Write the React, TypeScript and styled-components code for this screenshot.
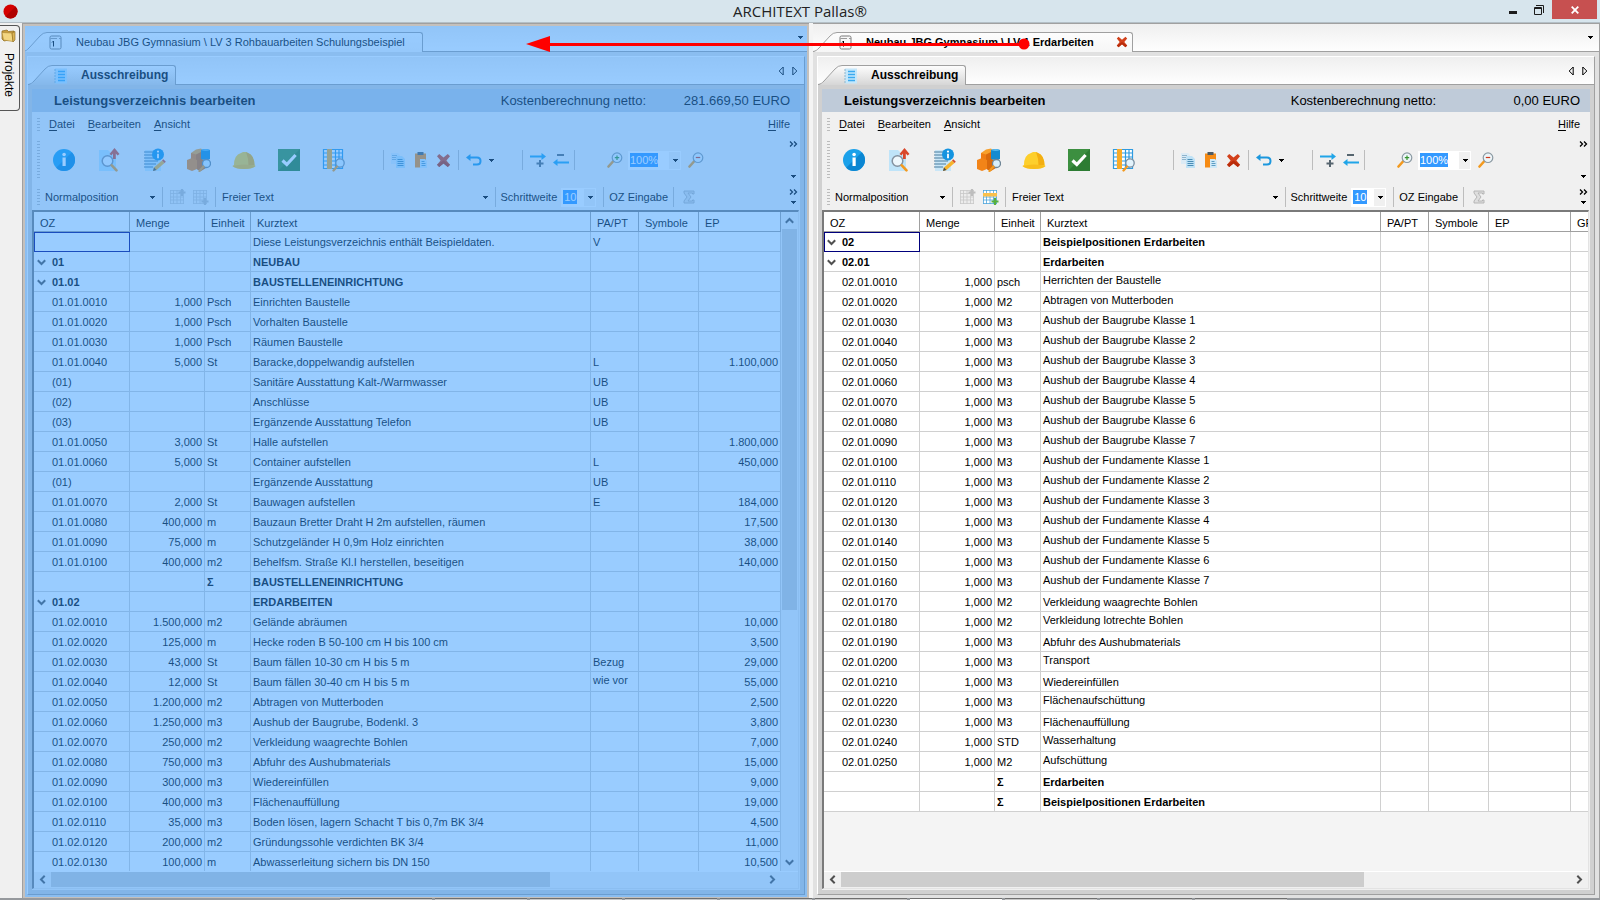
import React from 'react';
import styled, { createGlobalStyle, css } from 'styled-components';

const GlobalStyle = createGlobalStyle`
  *, *::before, *::after { box-sizing: border-box; }
  html, body { margin: 0; padding: 0; }
  body {
    font-family: "Liberation Sans", Arial, sans-serif;
    font-size: 11px;
    color: #000;
    background: #f0f0f0;
    overflow: hidden;
  }
  button, input, select { font: inherit; color: inherit; margin: 0; padding: 0; border: 0; background: none; border-radius: 0; }
`;

/* ---------- window frame ---------- */

const Window = styled.div`
  position: relative;
  display: flex;
  flex-direction: column;
  height: 100vh;
  background: #f0f0f0;
`;

const TitleBar = styled.header`
  position: relative;
  flex: none;
  display: flex;
  align-items: center;
  justify-content: center;
  height: 23px;
  background: #d7e5ed;
  border-bottom: 1px solid #b4bfc6;
`;

const AppTitle = styled.h1`
  margin: 0;
  font: 400 15px/22px "Open Sans", "Noto Sans", sans-serif;
  color: #222;
`;

const AppMark = styled.svg`
  position: absolute;
  left: 3px;
  top: 4px;
`;

const WindowButtons = styled.div`
  position: absolute;
  right: 3px;
  top: 0;
  display: flex;
`;

const WindowButton = styled.button<{ $close?: boolean }>`
  display: flex;
  align-items: center;
  justify-content: center;
  width: ${(p) => (p.$close ? 45 : 26)}px;
  height: 19px;
  background: ${(p) => (p.$close ? '#c75050' : 'transparent')};
`;

const Main = styled.div`
  flex: 1;
  min-height: 0;
  display: flex;
`;

const SideBar = styled.nav`
  flex: none;
  width: 22px;
  padding-top: 2px;
`;

const SideTab = styled.button`
  display: flex;
  flex-direction: column;
  align-items: center;
  gap: 9px;
  width: 20px;
  height: 86px;
  padding: 2px 2px 0 0;
  border: 1px solid #555;
  border-left: 0;
  border-radius: 0 4px 4px 0;
`;

const SideLabel = styled.span`
  writing-mode: vertical-rl;
  font-size: 12px;
  line-height: 14px;
`;

const Workspace = styled.main`
  flex: 1;
  min-width: 0;
  display: flex;
  gap: 4px;
  background: #f4f4f4;
  border-left: 1px solid #a0a0a0;
  border-right: 1px solid #a0a0a0;
`;

const TaskStrip = styled.footer`
  flex: none;
  display: flex;
  gap: 3px;
  height: 2px;
  padding-left: 340px;
  background: #96999d;
`;

const TaskSegment = styled.span<{ $active?: boolean }>`
  width: 92px;
  background: ${(p) => (p.$active ? '#fff' : '#c8c8c8')};
  border-top: 1px solid #6f6f6f;
`;

/* ---------- document panel ---------- */

const Panel = styled.section`
  position: relative;
  flex: 1;
  min-width: 0;
  display: flex;
  flex-direction: column;
  border-top: 1px solid #a0a0a0;
  background: #e1e1e1;
`;

const DropShade = styled.div`
  position: absolute;
  inset: 0;
  z-index: 2;
  border: 2px solid #c4c0bc;
  border-bottom-width: 1px;
  pointer-events: none;
  background: rgba(51, 153, 255, 0.5);
  background-clip: padding-box;
`;

const TabStrip = styled.div`
  flex: none;
  display: flex;
  align-items: flex-end;
  height: 28px;
  border-bottom: 1px solid #a0a0a0;
  background: linear-gradient(#efefef, #fefefe);
`;

const TabShape = styled.div<{ $shaded?: boolean }>`
  display: flex;
  height: 20px;
  margin-bottom: -1px;
  --tab-end: ${(p) => (p.$shaded ? '#d6d6d6' : '#f6f6f6')};
`;

const TabBody = styled.button<{ $bold?: boolean; $room: number }>`
  display: flex;
  align-items: center;
  height: 20px;
  padding: 0 ${(p) => p.$room}px 0 0;
  border-top: 1px solid #a0a0a0;
  border-right: 1px solid #a0a0a0;
  border-radius: 0 3px 0 0;
  background: linear-gradient(#fdfdfd, var(--tab-end));
  font-weight: ${(p) => (p.$bold ? 700 : 400)};
  white-space: nowrap;
`;

const TabLabel = styled.span<{ $size: number; $lead: number }>`
  margin-left: ${(p) => p.$lead}px;
  padding-bottom: 2px;
  font-size: ${(p) => p.$size}px;
`;

const StripTools = styled.div`
  display: flex;
  align-self: stretch;
  align-items: center;
  gap: 4px;
  margin-left: auto;
  padding-right: 4px;
`;

const GlyphButton = styled.button`
  display: flex;
  align-items: center;
  justify-content: center;
  width: 10px;
  height: 12px;
`;

const PanelInner = styled.div`
  flex: 1;
  min-height: 0;
  display: flex;
  flex-direction: column;
  margin: 4px 4px 3px;
  border: 1px solid #a0a0a0;
  border-top-color: #fff;
  border-left-color: #fff;
  background: #d0d0d0;
`;

const Editor = styled.div`
  flex: 1;
  min-height: 0;
  display: flex;
  flex-direction: column;
  margin: 4px;
  background: #f0f0f0;
`;

const Caption = styled.div`
  flex: none;
  display: flex;
  align-items: center;
  height: 23px;
  padding: 0 10px 0 22px;
  background: #bfcbd9;
  font-size: 13px;
  line-height: 22px;
`;

const CaptionTitle = styled.h2`
  flex: 1;
  margin: 0;
  font-size: 13px;
`;

const CaptionValue = styled.output`
  width: 144px;
  text-align: right;
`;

const Grip = styled.span<{ $height: number }>`
  flex: none;
  width: 3px;
  height: ${(p) => p.$height}px;
  background: repeating-linear-gradient(#bcbcbc 0 1px, transparent 1px 3px);
`;

const MenuBar = styled.div`
  flex: none;
  display: flex;
  align-items: center;
  height: 24px;
  padding: 0 10px 0 5px;
`;

const MenuButton = styled.button<{ $end?: boolean }>`
  line-height: 16px;
  margin-left: ${(p) => (p.$end ? 'auto' : '0')};
  margin-right: ${(p) => (p.$end ? 0 : 13)}px;
  &:first-of-type { margin-left: 9px; }
  u { text-underline-offset: 2px; }
`;

const Toolbar = styled.div<{ $height: number }>`
  flex: none;
  display: flex;
  align-items: center;
  height: ${(p) => p.$height}px;
  padding: 0 1px 0 5px;
`;

const ToolGroup = styled.div<{ $before?: number; $after?: number }>`
  flex: none;
  display: flex;
  align-items: center;
  margin-left: ${(p) => p.$before ?? 0}px;
  margin-right: ${(p) => p.$after ?? 0}px;
`;

const ToolButton = styled.button<{ $width: number }>`
  flex: none;
  display: flex;
  align-items: center;
  justify-content: center;
  width: ${(p) => p.$width}px;
  height: 24px;
`;

const Divider = styled.span`
  flex: none;
  width: 1px;
  height: 20px;
  background: #bdbdbd;
`;

const Overflow = styled.div<{ $gap: number }>`
  flex: none;
  display: flex;
  flex-direction: column;
  align-items: center;
  gap: ${(p) => p.$gap}px;
  width: 12px;
  margin-left: auto;
`;

const OverflowButton = styled.button`
  display: flex;
  align-items: center;
  justify-content: center;
  width: 12px;
  height: 8px;
`;

const ComboBox = styled.div<{ $width: number }>`
  flex: none;
  display: flex;
  align-items: stretch;
  width: ${(p) => p.$width}px;
  height: 19px;
  padding: 1px;
  background: #fff;
`;

const ComboInput = styled.input<{ $width: number }>`
  width: ${(p) => p.$width}px;
  height: 14px;
  margin: 1px auto 0 1px;
  background: #3399ff;
  color: #fff;
  font-size: 11px;
  text-align: center;
`;

const ComboArrow = styled.button`
  display: flex;
  align-items: center;
  justify-content: center;
  width: 11px;
  background: #f0f0f0;
`;

const SelectWrap = styled.span<{ $width?: number }>`
  display: flex;
  align-items: center;
  min-width: 0;
  ${(p) => (p.$width ? css`flex: none; width: ${p.$width}px;` : css`flex: 1;`)}
`;

const Select = styled.select`
  flex: 1;
  min-width: 0;
  appearance: none;
  outline: none;
  height: 18px;
`;

const FieldLabel = styled.label`
  flex: none;
  margin: 0 4px 0 4px;
`;

const TextButton = styled.button`
  flex: none;
  margin: 0 5px 0 5px;
`;

/* ---------- grid ---------- */

const GridFrame = styled.div`
  flex: 1;
  min-height: 0;
  display: flex;
  flex-direction: column;
  margin: 0 1px 1px 0;
  border: 1px solid #e3e3e3;
  border-top: 2px solid #7a7a7a;
  border-left: 2px solid #7a7a7a;
  background: #f4f4f4;
`;

const GridArea = styled.div`
  flex: 1;
  min-height: 0;
  display: flex;
`;

const GridView = styled.div`
  flex: 1;
  min-width: 0;
  overflow: hidden;
`;

const Table = styled.table`
  width: 100%;
  table-layout: fixed;
  border-collapse: separate;
  border-spacing: 0;
  background: #fff;
`;

const Head = styled.th`
  height: 20px;
  padding: 2px 0 0 6px;
  border-right: 1px solid #a0a0a0;
  border-bottom: 1px solid #a0a0a0;
  font-weight: 400;
  line-height: 14px;
  text-align: left;
  white-space: nowrap;
  overflow: hidden;
  &:nth-child(8) { border-right: 0; }
`;

const Cell = styled.td<{ $right?: boolean; $raised?: boolean; $bold?: boolean; $focus?: boolean }>`
  height: 20px;
  padding: 2px 2px 0;
  border-right: 1px solid #d0d0d0;
  border-bottom: 1px solid #d0d0d0;
  line-height: 13px;
  text-align: ${(p) => (p.$right ? 'right' : 'left')};
  font-weight: ${(p) => (p.$bold ? 700 : 400)};
  white-space: nowrap;
  overflow: hidden;
  ${(p) => p.$raised && css`padding-bottom: 4px;`}
  ${(p) => p.$focus && css`outline: 1px solid #00007c; outline-offset: -1px;`}
  &:nth-child(8) { border-right: 0; }
`;

const CodeBox = styled.div`
  display: flex;
  align-items: center;
`;

const Twisty = styled.span`
  display: flex;
  width: 16px;
  padding-left: 1px;
`;

const HScroll = styled.div<{ $corner?: boolean }>`
  flex: none;
  display: flex;
  height: 17px;
  padding-right: ${(p) => (p.$corner ? 17 : 0)}px;
  border-top: 1px solid #fff;
  background: #f0f0f0;
`;

const VScroll = styled.div`
  flex: none;
  display: flex;
  flex-direction: column;
  width: 17px;
  padding: 0 1px;
  background: #f0f0f0;
`;

const ScrollArrow = styled.button`
  flex: none;
  display: flex;
  align-items: center;
  justify-content: center;
  width: 17px;
  height: 17px;
  ${HScroll} & { height: 15px; }
  ${VScroll} & { width: 15px; }
`;

const Track = styled.div`
  flex: 1;
  min-width: 0;
  min-height: 0;
`;

const Thumb = styled.div<{ $share: number; $vertical?: boolean }>`
  background: #cdcdcd;
  ${(p) =>
    p.$vertical
      ? css`width: 15px; height: ${p.$share}%;`
      : css`height: 15px; width: ${p.$share}%;`}
`;

const DragArrow = styled.svg`
  position: absolute;
  left: 526px;
  top: 35px;
  z-index: 5;
  pointer-events: none;
`;

/* ---------- icons ---------- */

const DownGlyph = () => (
  <svg width="6" height="3" viewBox="0 0 6 3" shapeRendering="crispEdges"><path d="M0 0h6L3 3z" fill="#000" /></svg>
);

const MoreGlyph = () => (
  <svg width="9" height="6" viewBox="0 0 9 6"><path d="M1 0.5l2.500 2.500L1 5.500M5 0.500l2.500 2.500L5 5.500" fill="none" stroke="#000" strokeWidth="1.300" /></svg>
);

const Chevron = ({ turn = 0 }: { turn?: number }) => (
  <svg width="9" height="9" viewBox="0 0 9 9"><path d="M0.800 2.300l3.700 3.700 3.700-3.700" fill="none" stroke="#505050" strokeWidth="2" transform={`rotate(${turn} 4.5 4.5)`} /></svg>
);

const StepGlyph = ({ next }: { next?: boolean }) => (
  <svg width="6" height="10" viewBox="0 0 6 10"><path d={next ? 'M0.8 1v8l4-4z' : 'M5.2 1v8l-4-4z'} fill="none" stroke="#000" /></svg>
);

const DocIcon = () => (
  <svg width="13" height="15" viewBox="0 0 13 15">
    <path d="M1 2.500Q1 1 2.500 1H10.500Q12 1 12 2.500V12.500Q12 14 10.500 14H2.500Q1 14 1 12.500Z" fill="#f7f7f7" stroke="#7b7b7b" />
    <path d="M1.500 3.500H8M10 3.500H12" stroke="#9a9a9a" />
    <path d="M3 7.500L4.500 6V11.500" stroke="#000" fill="none" />
  </svg>
);

const SheetIcon = () => (
  <svg width="13" height="16" viewBox="0 0 13 16">
    <rect x="1" y="0.500" width="12" height="15" fill="#c4e7fb" />
    <path d="M0 2h2M0 5h2M0 8h2M0 11h2M0 14h2" stroke="#8fb6cc" />
    <path d="M4 3.500h7M4 6.500h7M4 9.500h7M4 12.500h7" stroke="#3aaaf0" strokeWidth="1.400" />
  </svg>
);

const FolderIcon = () => (
  <svg width="16" height="16" viewBox="0 0 16 16">
    <path d="M1 3l5-1 1.500 1.500L13 3v8L3 13 1 11z" fill="#c99d3d" stroke="#8c6a1e" strokeWidth="0.700" />
    <path d="M1 4.500L11 5l1 8.500L2.500 12z" fill="#f3d681" stroke="#a88330" strokeWidth="0.600" />
    <path d="M11 5l3-1.500V12l-2 2z" fill="#dcb455" stroke="#8c6a1e" strokeWidth="0.600" />
  </svg>
);

const CrossIcon = ({ size = 15 }: { size?: number }) => (
  <svg width={size} height={size} viewBox="0 0 15 15">
    <path d="M1 3.200L3.200 1 7.500 4.600 11.800 1 14 3.200 10.400 7.500 14 11.800 11.800 14 7.500 10.400 3.200 14 1 11.800 4.600 7.500z" fill="#d2401a" />
    <path d="M7.500 7.500L14 11.800 11.800 14 7.500 10.400 3.200 14 1 11.800z" fill="#b92c0a" />
  </svg>
);

const InfoIcon = () => (
  <svg width="24" height="24" viewBox="0 0 24 24">
    <circle cx="12" cy="12" r="11" fill="#1ba1ea" />
    <path d="M19.800 4.200A11 11 0 0 1 4.200 19.800z" fill="#0b86d2" />
    <rect x="10.500" y="9.500" width="3.200" height="8.500" fill="#fff" />
    <circle cx="12.100" cy="6.500" r="1.800" fill="#fff" />
  </svg>
);

const SearchUpIcon = () => (
  <svg width="24" height="24" viewBox="0 0 24 24">
    <path d="M2 2h9l8 8v13H2z" fill="#bfe4f9" />
    <path d="M17.500 0L22.500 6 20.500 7.500 18.800 5.500V11h-2.800V5.500L14.500 7.500 12.500 6z" fill="#d9472b" />
    <circle cx="10.500" cy="13" r="5.300" fill="#eef7fc" stroke="#8492a0" strokeWidth="1.500" />
    <path d="M14.800 17.300l4.700 5" stroke="#f39a1f" strokeWidth="2.600" strokeLinecap="round" />
  </svg>
);

const NoteIcon = () => (
  <svg width="24" height="24" viewBox="0 0 24 24">
    <path d="M3 2h16v21H3z" fill="#c9e6f7" />
    <path d="M2 4h10M2 7h10M2 10h11M2 13h14M2 16h12M2 19h9" stroke="#4b7d9e" strokeWidth="1.200" />
    <circle cx="16" cy="6.500" r="6" fill="#1494e0" />
    <path d="M16 5.800v4.500" stroke="#fff" strokeWidth="1.800" />
    <circle cx="16" cy="3.600" r="1.100" fill="#fff" />
    <path d="M11 23l1-3.500 8-7 2.500 2.500-8 7z" fill="#f6b32c" />
    <path d="M20 12.500l1.300-1.200 2.500 2.500L22.500 15z" fill="#d24a2c" />
    <path d="M11 23l1-3.500 2.400 2.500z" fill="#4a4a4a" />
  </svg>
);

const BricksIcon = () => (
  <svg width="24" height="24" viewBox="0 0 24 24">
    <path d="M4 5l5-3.500L14 .500l2 2V10H4z" fill="#f7a02c" />
    <path d="M4 5l5 1.500V14H4z" fill="#ee7d14" />
    <path d="M9 6.500l6-3V13l-6 3z" fill="#d96a0c" />
    <path d="M0 12l5-2 5 2v9l-5 2-5-2z" fill="#f28418" />
    <path d="M10 13l5-2 4 2v7l-5 3-4-1.500z" fill="#d96a0c" />
    <path d="M14 2q4-2 9 0v9q-4 2-9 0z" fill="#158bd0" />
    <path d="M14 2q4-2 9 0-4 2-9 0z" fill="#58b9ee" />
    <circle cx="19.500" cy="15.500" r="4" fill="#d9effb" stroke="#6f8696" strokeWidth="1.300" />
    <path d="M16.500 18.500L12.500 23" stroke="#f39a1f" strokeWidth="2.300" strokeLinecap="round" />
  </svg>
);

const HelmetIcon = () => (
  <svg width="24" height="24" viewBox="0 0 24 24">
    <path d="M2 17Q2 7 9 5l2-1h3l2 1q6 2 6.500 12l1 1q-3 3-11.500 3T.5 18z" fill="#fdcf2c" />
    <path d="M14 4l2 1q6 2 6.500 12l-6 1q0-8-2.500-14z" fill="#f3ae12" />
    <path d="M.5 18q5-1.500 11.500-1.500T23.500 18q-3 3-11.500 3T.5 18z" fill="#f8bd1c" />
  </svg>
);

const CheckIcon = () => (
  <svg width="22" height="22" viewBox="0 0 22 22">
    <rect width="22" height="22" fill="#3c8f40" />
    <path d="M0 22L22 0V22z" fill="#2d7c33" />
    <path d="M4.500 11.500l4.300 4 8.800-9.500" fill="none" stroke="#fff" strokeWidth="3.200" />
  </svg>
);

const GridSearchIcon = () => (
  <svg width="24" height="24" viewBox="0 0 24 24">
    <rect x="1.500" y="1.500" width="19" height="19" fill="#fff" />
    <path d="M1.500 1v20M5.500 1v20M13.500 1v20M17 1v20M20.500 1v20M1 1.500h20M1 5h20M1 9h20M1 13h20M1 17h20M1 20.500h20" stroke="#2f9be0" strokeWidth="1.200" />
    <rect x="5" y="1" width="5" height="20" fill="#f9ab28" />
    <circle cx="18" cy="15" r="4.200" fill="#e3f3fc" stroke="#7a8fa0" strokeWidth="1.300" />
    <path d="M15 18.500L11.500 22.500" stroke="#f39a1f" strokeWidth="2.300" strokeLinecap="round" />
  </svg>
);

const CopyIcon = () => (
  <svg width="16" height="16" viewBox="0 0 16 16">
    <path d="M1 1h7l2 2v9H1z" fill="#dcebf5" />
    <path d="M2 3.500h5M2 5.500h5M2 7.500h5" stroke="#8eb4cd" />
    <path d="M6 4h6l3 3v9H6z" fill="#bfe2f6" />
    <path d="M7.500 7.500h5M7.500 9.500h6M7.500 11.500h6M7.500 13.500h6" stroke="#4b8db5" />
  </svg>
);

const PasteIcon = () => (
  <svg width="16" height="16" viewBox="0 0 16 16">
    <rect x="2" y="1.500" width="11" height="14" fill="#f68b14" />
    <rect x="4.500" y="0" width="6" height="3" fill="#4d5a63" />
    <path d="M7 7h5l2 2v7H7z" fill="#cfe9f8" />
    <path d="M8.500 9.500h3M8.500 11.500h4M8.500 13.500h4" stroke="#5c9dc4" />
  </svg>
);

const UndoIcon = () => (
  <svg width="16" height="12" viewBox="0 0 16 12">
    <path d="M2 3.500H11Q14.500 3.500 14.500 7T11 10.500H7" fill="none" stroke="#1c97dd" strokeWidth="2" />
    <path d="M0 3.500L4.500 0V7z" fill="#1c97dd" />
  </svg>
);

const InsertRowIcon = () => (
  <svg width="16" height="16" viewBox="0 0 16 16">
    <path d="M0 4.500h12" stroke="#20a5e8" strokeWidth="2" />
    <path d="M11.500 1l4.500 3.500-4.500 3.500z" fill="#20a5e8" />
    <path d="M10 8v7M6.500 11.500h7" stroke="#56656f" strokeWidth="2" />
  </svg>
);

const RemoveRowIcon = () => (
  <svg width="16" height="16" viewBox="0 0 16 16">
    <path d="M4 3h7" stroke="#56656f" strokeWidth="2" />
    <path d="M4 10.500h12" stroke="#20a5e8" strokeWidth="2" />
    <path d="M0 10.500l4.500-3.500v7z" fill="#20a5e8" />
  </svg>
);

const ZoomIcon = ({ out }: { out?: boolean }) => (
  <svg width="16" height="16" viewBox="0 0 16 16">
    <path d="M1.500 14.500L6 9.500" stroke="#f39a1f" strokeWidth="2.600" strokeLinecap="round" />
    <circle cx="10" cy="5.700" r="4.800" fill="#edf5f8" stroke="#8b99a2" strokeWidth="1.200" />
    {out ? <path d="M7.800 5.500h4.400" stroke="#d0381c" strokeWidth="1.200" /> : <path d="M7.800 5.700h4.400M10 3.500v4.400" stroke="#35942f" strokeWidth="1.200" />}
  </svg>
);

const RowAddIcon = ({ up, live }: { up?: boolean; live?: boolean }) => (
  <svg width="16" height="16" viewBox="0 0 16 16">
    <rect x="0.500" y="1.500" width="13" height="13" fill={live ? '#fff' : '#ececec'} />
    <path d="M0.500 1v14M3.500 1v14M7 1v14M10.500 1v14M13.500 1v14M0 1.500h14M0 4.500h14M0 8h14M0 11h14M0 14.500h14" stroke={live ? '#4ea6dc' : '#c8c8c8'} strokeWidth="0.800" />
    {live && <rect x="0" y="4" width="14" height="3.500" fill="#f9c04c" />}
    <path d={up ? 'M12 0v7M8.500 3.500h7' : 'M12 9v7M8.500 12.500h7'} stroke={live ? '#58b03c' : '#bdbdbd'} strokeWidth="2.200" />
  </svg>
);

const SigmaIcon = () => (
  <svg width="12" height="14" viewBox="0 0 12 14">
    <path d="M1 1h10v3H9.500V3H5l3 4-3 4h4.500v-1H11v3H1v-2l3-4-3-4z" fill="#dedede" stroke="#b0b0b0" strokeWidth="0.900" />
  </svg>
);

/* ---------- data ---------- */

interface Row {
  oz?: string;
  qty?: string;
  unit?: string;
  text: string;
  pa?: string;
  ep?: string;
  bold?: boolean;
  open?: boolean;
  raised?: boolean;
  paRaised?: boolean;
}

const group = (oz: string, text: string): Row => ({ oz, text, bold: true, open: true });
const sum = (text: string): Row => ({ unit: 'Σ', text, bold: true });
const item = (oz: string, qty: string, unit: string, text: string, pa = '', ep = ''): Row => ({ oz, qty, unit, text, pa, ep });

const buildingRows: Row[] = [
  { text: 'Diese Leistungsverzeichnis enthält Beispieldaten.', pa: 'V' },
  group('01', 'NEUBAU'),
  group('01.01', 'BAUSTELLENEINRICHTUNG'),
  item('01.01.0010', '1,000', 'Psch', 'Einrichten Baustelle'),
  item('01.01.0020', '1,000', 'Psch', 'Vorhalten Baustelle'),
  item('01.01.0030', '1,000', 'Psch', 'Räumen Baustelle'),
  item('01.01.0040', '5,000', 'St', 'Baracke,doppelwandig aufstellen', 'L', '1.100,000'),
  item('(01)', '', '', 'Sanitäre Ausstattung Kalt-/Warmwasser', 'UB'),
  item('(02)', '', '', 'Anschlüsse', 'UB'),
  item('(03)', '', '', 'Ergänzende Ausstattung Telefon', 'UB'),
  item('01.01.0050', '3,000', 'St', 'Halle aufstellen', '', '1.800,000'),
  item('01.01.0060', '5,000', 'St', 'Container aufstellen', 'L', '450,000'),
  item('(01)', '', '', 'Ergänzende Ausstattung', 'UB'),
  item('01.01.0070', '2,000', 'St', 'Bauwagen aufstellen', 'E', '184,000'),
  item('01.01.0080', '400,000', 'm', 'Bauzaun Bretter Draht H 2m aufstellen, räumen', '', '17,500'),
  item('01.01.0090', '75,000', 'm', 'Schutzgeländer H 0,9m Holz einrichten', '', '38,000'),
  item('01.01.0100', '400,000', 'm2', 'Behelfsm. Straße Kl.I herstellen, beseitigen', '', '140,000'),
  sum('BAUSTELLENEINRICHTUNG'),
  group('01.02', 'ERDARBEITEN'),
  item('01.02.0010', '1.500,000', 'm2', 'Gelände abräumen', '', '10,000'),
  item('01.02.0020', '125,000', 'm', 'Hecke roden B 50-100 cm H bis 100 cm', '', '3,500'),
  item('01.02.0030', '43,000', 'St', 'Baum fällen 10-30 cm H bis 5 m', 'Bezug', '29,000'),
  { ...item('01.02.0040', '12,000', 'St', 'Baum fällen 30-40 cm H bis 5 m', 'wie vor', '55,000'), paRaised: true },
  item('01.02.0050', '1.200,000', 'm2', 'Abtragen von Mutterboden', '', '2,500'),
  item('01.02.0060', '1.250,000', 'm3', 'Aushub der Baugrube, Bodenkl. 3', '', '3,800'),
  item('01.02.0070', '250,000', 'm2', 'Verkleidung waagrechte Bohlen', '', '7,000'),
  item('01.02.0080', '750,000', 'm3', 'Abfuhr des Aushubmaterials', '', '15,000'),
  item('01.02.0090', '300,000', 'm3', 'Wiedereinfüllen', '', '9,000'),
  item('01.02.0100', '400,000', 'm3', 'Flächenauffüllung', '', '19,000'),
  item('01.02.0110', '35,000', 'm3', 'Boden lösen, lagern Schacht T bis 0,7m BK 3/4', '', '4,500'),
  item('01.02.0120', '200,000', 'm2', 'Gründungssohle verdichten BK 3/4', '', '11,000'),
  item('01.02.0130', '100,000', 'm', 'Abwasserleitung sichern bis DN 150', '', '10,500'),
];

const earthworks: [string, string, boolean?][] = [
  ['psch', 'Herrichten der Baustelle', true],
  ['M2', 'Abtragen von Mutterboden', true],
  ...[1, 2, 3, 4, 5, 6, 7].map((n): [string, string, boolean] => ['M3', `Aushub der Baugrube Klasse ${n}`, true]),
  ...[1, 2, 3, 4, 5, 6, 7].map((n): [string, string, boolean] => ['M3', `Aushub der Fundamente Klasse ${n}`, true]),
  ['M2', 'Verkleidung waagrechte Bohlen'],
  ['M2', 'Verkleidung lotrechte Bohlen', true],
  ['M3', 'Abfuhr des Aushubmaterials'],
  ['M3', 'Transport', true],
  ['M3', 'Wiedereinfüllen'],
  ['M3', 'Flächenaufschüttung', true],
  ['M3', 'Flächenauffüllung'],
  ['STD', 'Wasserhaltung', true],
  ['M2', 'Aufschüttung', true],
];

const earthworkRows: Row[] = [
  group('02', 'Beispielpositionen Erdarbeiten'),
  group('02.01', 'Erdarbeiten'),
  ...earthworks.map(([unit, text, raised], i): Row => ({
    oz: `02.01.${String((i + 1) * 10).padStart(4, '0')}`,
    qty: '1,000',
    unit,
    text,
    raised,
  })),
  sum('Erdarbeiten'),
  sum('Beispielpositionen Erdarbeiten'),
];

/* ---------- composed parts ---------- */

interface TabProps {
  icon: React.ReactNode;
  label: string;
  bold?: boolean;
  shaded?: boolean;
  size: number;
  lead: number;
  room: number;
  children?: React.ReactNode;
}

const Tab = ({ icon, label, bold, shaded, size, lead, room, children }: TabProps) => {
  const id = React.useId();
  return (
    <TabShape $shaded={shaded}>
      <svg width="26" height="20" viewBox="0 0 26 20">
        <defs>
          <linearGradient id={id} x1="0" y1="0" x2="0" y2="1">
            <stop offset="0" stopColor="#fdfdfd" />
            <stop offset="1" stopColor="var(--tab-end)" />
          </linearGradient>
        </defs>
        <path d="M0 20C3 19 4 18 6 16L17 4Q20 .5 24 .5H26V20z" fill={`url(#${id})`} />
        <path d="M0 19.500C3 19 4 18 6 16L17 4Q20 .5 24 .5H26" fill="none" stroke="#a0a0a0" />
      </svg>
      <TabBody $bold={bold} $room={room}>
        {icon}
        <TabLabel $size={size} $lead={lead}>{label}</TabLabel>
        {children}
      </TabBody>
    </TabShape>
  );
};

const CloseMark = styled.span`
  display: flex;
  margin-left: 22px;
  padding-bottom: 2px;
`;

const Menu = ({ label, end }: { label: string; end?: boolean }) => (
  <MenuButton $end={end}><u>{label[0]}</u>{label.slice(1)}</MenuButton>
);

const mainTools: [string, React.ReactNode][] = [
  ['Info', <InfoIcon />],
  ['Suchen', <SearchUpIcon />],
  ['Langtext', <NoteIcon />],
  ['Elemente', <BricksIcon />],
  ['Gewerke', <HelmetIcon />],
  ['Prüfen', <CheckIcon />],
  ['Tabelle', <GridSearchIcon />],
];

const LedgerGrid = ({ rows, wide, share }: { rows: Row[]; wide?: boolean; share: number }) => (
  <GridFrame>
    <GridArea>
      <GridView>
        <Table>
          <colgroup>
            <col style={{ width: 96 }} />
            <col style={{ width: 75 }} />
            <col style={{ width: 46 }} />
            <col />
            <col style={{ width: 48 }} />
            <col style={{ width: 60 }} />
            <col style={{ width: 82 }} />
            {wide && <col style={{ width: 17 }} />}
          </colgroup>
          <thead>
            <tr>
              {['OZ', 'Menge', 'Einheit', 'Kurztext', 'PA/PT', 'Symbole', 'EP'].map((h) => <Head key={h} scope="col">{h}</Head>)}
              {wide && <Head scope="col">GP</Head>}
            </tr>
          </thead>
          <tbody>
            {rows.map((r, i) => (
              <tr key={i}>
                <Cell $bold={r.bold} $focus={i === 0}>
                  <CodeBox><Twisty>{r.open && <Chevron />}</Twisty>{r.oz}</CodeBox>
                </Cell>
                <Cell $right>{r.qty}</Cell>
                <Cell $bold={r.bold}>{r.unit}</Cell>
                <Cell $bold={r.bold} $raised={r.raised}>{r.text}</Cell>
                <Cell $raised={r.paRaised}>{r.pa}</Cell>
                <Cell />
                <Cell $right>{r.ep}</Cell>
                {wide && <Cell />}
              </tr>
            ))}
          </tbody>
        </Table>
      </GridView>
      {!wide && (
        <VScroll>
          <ScrollArrow aria-label="Nach oben"><Chevron turn={180} /></ScrollArrow>
          <Track><Thumb $vertical $share={61} /></Track>
          <ScrollArrow aria-label="Nach unten"><Chevron /></ScrollArrow>
        </VScroll>
      )}
    </GridArea>
    <HScroll $corner={!wide}>
      <ScrollArrow aria-label="Nach links"><Chevron turn={90} /></ScrollArrow>
      <Track><Thumb $share={share} /></Track>
      <ScrollArrow aria-label="Nach rechts"><Chevron turn={-90} /></ScrollArrow>
    </HScroll>
  </GridFrame>
);

interface DocumentProps {
  title: string;
  total: string;
  rows: Row[];
  active?: boolean;
  share: number;
}

const DocumentPanel = ({ title, total, rows, active, share }: DocumentProps) => {
  const stepId = React.useId();
  return (
    <Panel>
      <TabStrip>
        <Tab icon={<DocIcon />} label={title} bold={active} size={11} lead={14} room={active ? 4 : 17}>
          {active && <CloseMark><CrossIcon size={12} /></CloseMark>}
        </Tab>
        <StripTools><GlyphButton aria-label="Fensterliste"><DownGlyph /></GlyphButton></StripTools>
      </TabStrip>
      <PanelInner>
        <TabStrip>
          <Tab icon={<SheetIcon />} label="Ausschreibung" bold shaded size={12} lead={14} room={7} />
          <StripTools>
            <GlyphButton aria-label="Zurück"><StepGlyph /></GlyphButton>
            <GlyphButton aria-label="Weiter"><StepGlyph next /></GlyphButton>
          </StripTools>
        </TabStrip>
        <Editor>
          <Caption>
            <CaptionTitle>Leistungsverzeichnis bearbeiten</CaptionTitle>
            <span>Kostenberechnung netto:</span>
            <CaptionValue>{total}</CaptionValue>
          </Caption>
          <MenuBar>
            <Grip $height={13} />
            <Menu label="Datei" />
            <Menu label="Bearbeiten" />
            <Menu label="Ansicht" />
            <Menu label="Hilfe" end />
          </MenuBar>
          <Toolbar $height={48}>
            <Grip $height={39} />
            <ToolGroup $before={1} $after={27}>
              {mainTools.map(([name, icon]) => <ToolButton key={name} $width={45} aria-label={name}>{icon}</ToolButton>)}
            </ToolGroup>
            <Divider />
            <ToolGroup $before={2} $after={3}>
              <ToolButton $width={23} aria-label="Kopieren"><CopyIcon /></ToolButton>
              <ToolButton $width={23} aria-label="Einfügen"><PasteIcon /></ToolButton>
              <ToolButton $width={23} aria-label="Löschen"><CrossIcon /></ToolButton>
            </ToolGroup>
            <Divider />
            <ToolGroup $before={3} $after={26}>
              <ToolButton $width={23} aria-label="Rückgängig"><UndoIcon /></ToolButton>
              <ToolButton $width={11} aria-label="Verlauf"><DownGlyph /></ToolButton>
            </ToolGroup>
            <Divider />
            <ToolGroup $before={3} $after={2}>
              <ToolButton $width={23} aria-label="Zeile einfügen"><InsertRowIcon /></ToolButton>
              <ToolButton $width={23} aria-label="Zeile entfernen"><RemoveRowIcon /></ToolButton>
            </ToolGroup>
            <Divider />
            <ToolGroup $before={28}>
              <ToolButton $width={23} aria-label="Vergrößern"><ZoomIcon /></ToolButton>
              <ToolGroup $before={2} $after={1}>
                <ComboBox $width={53}>
                  <ComboInput $width={28} aria-label="Zoom" defaultValue="100%" />
                  <ComboArrow aria-label="Zoomstufen"><DownGlyph /></ComboArrow>
                </ComboBox>
              </ToolGroup>
              <ToolButton $width={28} aria-label="Verkleinern"><ZoomIcon out /></ToolButton>
            </ToolGroup>
            <Overflow $gap={24}>
              <OverflowButton aria-label="Mehr"><MoreGlyph /></OverflowButton>
              <OverflowButton aria-label="Anpassen"><DownGlyph /></OverflowButton>
            </Overflow>
          </Toolbar>
          <Toolbar $height={26}>
            <Grip $height={17} />
            <ToolGroup $before={5} $after={7}>
              <SelectWrap $width={110}>
                <Select aria-label="Positionsart"><option>Normalposition</option></Select>
                <DownGlyph />
              </SelectWrap>
            </ToolGroup>
            <Divider />
            <ToolGroup $before={3} $after={3}>
              <ToolButton $width={23} aria-label="Zeile darüber"><RowAddIcon up /></ToolButton>
              <ToolButton $width={23} aria-label="Zeile darunter"><RowAddIcon live={active} /></ToolButton>
            </ToolGroup>
            <Divider />
            <ToolGroup $before={6} />
            <SelectWrap>
              <Select aria-label="Textart"><option>Freier Text</option></Select>
              <DownGlyph />
            </SelectWrap>
            <ToolGroup $before={7} />
            <Divider />
            <FieldLabel htmlFor={stepId}>Schrittweite</FieldLabel>
            <ComboBox $width={35}>
              <ComboInput id={stepId} $width={14} defaultValue="10" />
              <ComboArrow aria-label="Schrittweiten"><DownGlyph /></ComboArrow>
            </ComboBox>
            <ToolGroup $before={7} />
            <Divider />
            <TextButton>OZ Eingabe</TextButton>
            <Divider />
            <ToolGroup $before={3} $after={87}>
              <ToolButton $width={23} aria-label="Summe"><SigmaIcon /></ToolButton>
            </ToolGroup>
            <Overflow $gap={2}>
              <OverflowButton aria-label="Mehr"><MoreGlyph /></OverflowButton>
              <OverflowButton aria-label="Anpassen"><DownGlyph /></OverflowButton>
            </Overflow>
          </Toolbar>
          <LedgerGrid rows={rows} wide={active} share={share} />
        </Editor>
      </PanelInner>
      {!active && <DropShade />}
    </Panel>
  );
};

export default function App() {
  return (
    <>
      <GlobalStyle />
      <Window>
        <TitleBar>
          <AppMark width="15" height="15" viewBox="0 0 15 15">
            <circle cx="7.500" cy="7.500" r="7" fill="#d40000" />
            <path d="M12.500 2.500A7 7 0 0 1 2.500 12.500z" fill="#b00000" />
          </AppMark>
          <AppTitle>ARCHITEXT Pallas®</AppTitle>
          <WindowButtons>
            <WindowButton aria-label="Minimieren">
              <svg width="8" height="12" viewBox="0 0 8 12"><path d="M0 7h8v3H0z" fill="#1c1c1c" /></svg>
            </WindowButton>
            <WindowButton aria-label="Wiederherstellen">
              <svg width="10" height="10" viewBox="0 0 10 10"><path d="M.5 2.500h7v7h-7zM.5 3.500h7M2 .5h7.500V8" fill="none" stroke="#1c1c1c" /></svg>
            </WindowButton>
            <WindowButton $close aria-label="Schließen">
              <svg width="8" height="8" viewBox="0 0 8 8"><path d="M.7.7l6.600 6.600M7.300.7L.7 7.300" stroke="#fff" strokeWidth="1.800" /></svg>
            </WindowButton>
          </WindowButtons>
        </TitleBar>
        <Main>
          <SideBar>
            <SideTab><FolderIcon /><SideLabel>Projekte</SideLabel></SideTab>
          </SideBar>
          <Workspace>
            <DocumentPanel title={'Neubau JBG Gymnasium \\ LV 3 Rohbauarbeiten Schulungsbeispiel'} total="281.669,50 EURO" rows={buildingRows} share={70} />
            <DocumentPanel title={'Neubau JBG Gymnasium \\ LV 1 Erdarbeiten'} total="0,00 EURO" rows={earthworkRows} active share={71.6} />
          </Workspace>
        </Main>
        <TaskStrip>
          {Array.from({ length: 10 }, (_, i) => <TaskSegment key={i} $active={i === 6} />)}
        </TaskStrip>
        <DragArrow width="504" height="18" viewBox="0 0 504 18">
          <path d="M0 9L24 1v16z" fill="#f00" />
          <path d="M22 9.500H498" stroke="#f00" strokeWidth="3" />
          <circle cx="498" cy="9" r="5.500" fill="#f00" />
        </DragArrow>
      </Window>
    </>
  );
}
